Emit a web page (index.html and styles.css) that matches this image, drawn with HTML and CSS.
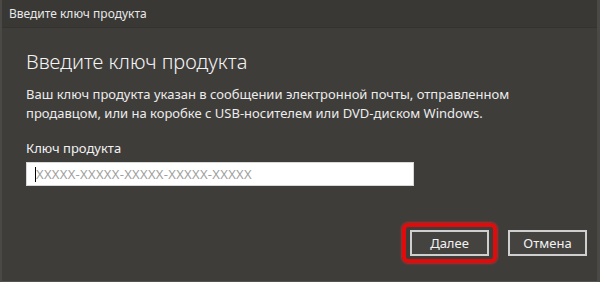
FILE: index.html
```html
<!DOCTYPE html>
<html lang="ru">
<head>
    <meta charset="UTF-8">
    <title>Введите ключ продукта</title>
    <link rel="stylesheet" href="styles.css">
</head>
<body>

<div class="window">
    <div class="titlebar">Введите ключ продукта</div>
    <div class="content">
        <h1>Введите ключ продукта</h1>
        <p class="note">Ваш ключ продукта указан в сообщении электронной почты, отправленном продавцом, или на коробке с USB-носителем или DVD-диском Windows.</p>

        <label for="productKey">Ключ продукта</label>
        <div class="key-box">
            <span class="caret"></span>
            <span class="placeholder">XXXXX-XXXXX-XXXXX-XXXXX-XXXXX</span>
        </div>

        <div class="actions">
            <span class="highlight"><button class="btn">Далее</button></span>
            <button class="btn">Отмена</button>
        </div>
    </div>
</div>

</body>
</html>
```

FILE: styles.css
```css
body {
    margin: 0;
    font-family: 'Noto Sans', 'Open Sans', sans-serif;
    background-color: #3f3d3a;
    color: #f2f2f2;
}
.window {
    height: 282px;
    box-sizing: border-box;
    border-left: 2px solid #4b4946;
    border-right: 3px solid #4b4946;
    border-bottom: 1px solid #555350;
}
.titlebar {
    height: 27px;
    line-height: 28px;
    padding-left: 7px;
    font-size: 12px;
    color: #e8e8e8;
    background-color: #393835;
    border-bottom: 1px solid #34332f;
}
.content {
    padding: 0 24px;
}
h1 {
    font-weight: 300;
    font-size: 20px;
    margin: 20px 0 10px;
    color: #f4f4f4;
}
.note {
    font-size: 13px;
    line-height: 19px;
    margin: 0 0 16px;
    color: #ececec;
}
label {
    display: block;
    font-size: 13px;
    margin-bottom: 5px;
}
.key-box {
    width: 388px;
    height: 24px;
    box-sizing: border-box;
    background-color: #fff;
    border: 1px solid #d8d8d8;
    display: flex;
    align-items: center;
    padding-left: 8px;
}
.caret {
    width: 1px;
    height: 15px;
    background-color: #000;
}
.placeholder {
    color: #a0a0a0;
    font-size: 13px;
    letter-spacing: 0.3px;
}
.actions {
    display: flex;
    justify-content: flex-end;
    align-items: center;
    gap: 11px;
    margin-top: 37px;
    margin-right: -14px;
}
.highlight {
    display: inline-flex;
    padding: 3px 4px;
    border: 4px solid #e20b0b;
    border-radius: 6px;
    box-shadow: 0 0 3px #ff2a2a;
}
.btn {
    width: 79px;
    height: 26px;
    font-family: inherit;
    font-size: 13px;
    color: #f2f2f2;
    background-color: #454340;
    border: 2px solid #cfcfcf;
}
```
